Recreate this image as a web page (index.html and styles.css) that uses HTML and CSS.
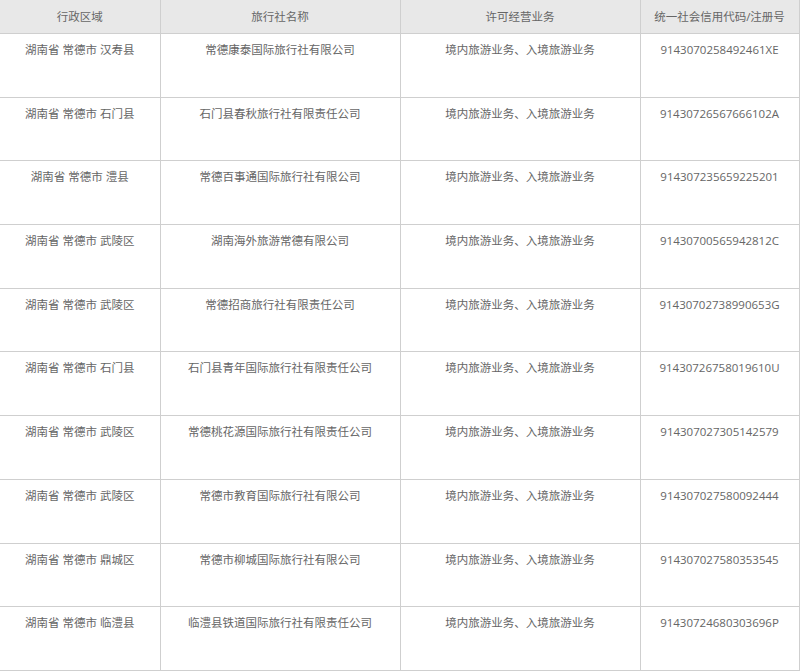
FILE: index.html
```html
<!DOCTYPE html>
<html lang="zh-CN">
<head>
<meta charset="utf-8">
<title>旅行社名录</title>
<link rel="stylesheet" href="styles.css">
</head>
<body>
<table class="agency-table">
  <colgroup>
    <col class="c1"><col class="c2"><col class="c3"><col class="c4">
  </colgroup>
  <thead>
    <tr><th>行政区域</th><th>旅行社名称</th><th>许可经营业务</th><th>统一社会信用代码/注册号</th></tr>
  </thead>
  <tbody>
    <tr><td>湖南省 常德市 汉寿县</td><td>常德康泰国际旅行社有限公司</td><td>境内旅游业务、入境旅游业务</td><td>9143070258492461XE</td></tr>
    <tr><td>湖南省 常德市 石门县</td><td>石门县春秋旅行社有限责任公司</td><td>境内旅游业务、入境旅游业务</td><td>91430726567666102A</td></tr>
    <tr><td>湖南省 常德市 澧县</td><td>常德百事通国际旅行社有限公司</td><td>境内旅游业务、入境旅游业务</td><td>914307235659225201</td></tr>
    <tr><td>湖南省 常德市 武陵区</td><td>湖南海外旅游常德有限公司</td><td>境内旅游业务、入境旅游业务</td><td>91430700565942812C</td></tr>
    <tr><td>湖南省 常德市 武陵区</td><td>常德招商旅行社有限责任公司</td><td>境内旅游业务、入境旅游业务</td><td>91430702738990653G</td></tr>
    <tr><td>湖南省 常德市 石门县</td><td>石门县青年国际旅行社有限责任公司</td><td>境内旅游业务、入境旅游业务</td><td>91430726758019610U</td></tr>
    <tr><td>湖南省 常德市 武陵区</td><td>常德桃花源国际旅行社有限责任公司</td><td>境内旅游业务、入境旅游业务</td><td>914307027305142579</td></tr>
    <tr><td>湖南省 常德市 武陵区</td><td>常德市教育国际旅行社有限公司</td><td>境内旅游业务、入境旅游业务</td><td>914307027580092444</td></tr>
    <tr><td>湖南省 常德市 鼎城区</td><td>常德市柳城国际旅行社有限公司</td><td>境内旅游业务、入境旅游业务</td><td>914307027580353545</td></tr>
    <tr><td>湖南省 常德市 临澧县</td><td>临澧县铁道国际旅行社有限责任公司</td><td>境内旅游业务、入境旅游业务</td><td>91430724680303696P</td></tr>
  </tbody>
</table>
</body>
</html>
```

FILE: styles.css
```css
html, body {
  margin: 0;
  padding: 0;
  background: #fff;
}
body {
  font-family: "Open Sans", "Noto Sans CJK SC", sans-serif;
  font-size: 11.5px;
  color: #666;
}
.agency-table {
  border-collapse: collapse;
  table-layout: fixed;
  width: 799px;
  margin-top: -1px;
}
.c1 { width: 160px; }
.c2 { width: 240px; }
.c3 { width: 240px; }
.c4 { width: 159px; }
.agency-table th,
.agency-table td {
  border: 1px solid #cfcfcf;
  text-align: center;
  vertical-align: top;
  line-height: 16px;
  font-weight: normal;
  padding: 0 4px;
  box-sizing: border-box;
}
.agency-table th {
  background: #e8e8e8;
  height: 34px;
  padding-top: 9px;
}
.agency-table td {
  height: 63.7px;
  padding-top: 8px;
}
.agency-table td:first-child,
.agency-table th:first-child {
  border-left: none;
}
```
